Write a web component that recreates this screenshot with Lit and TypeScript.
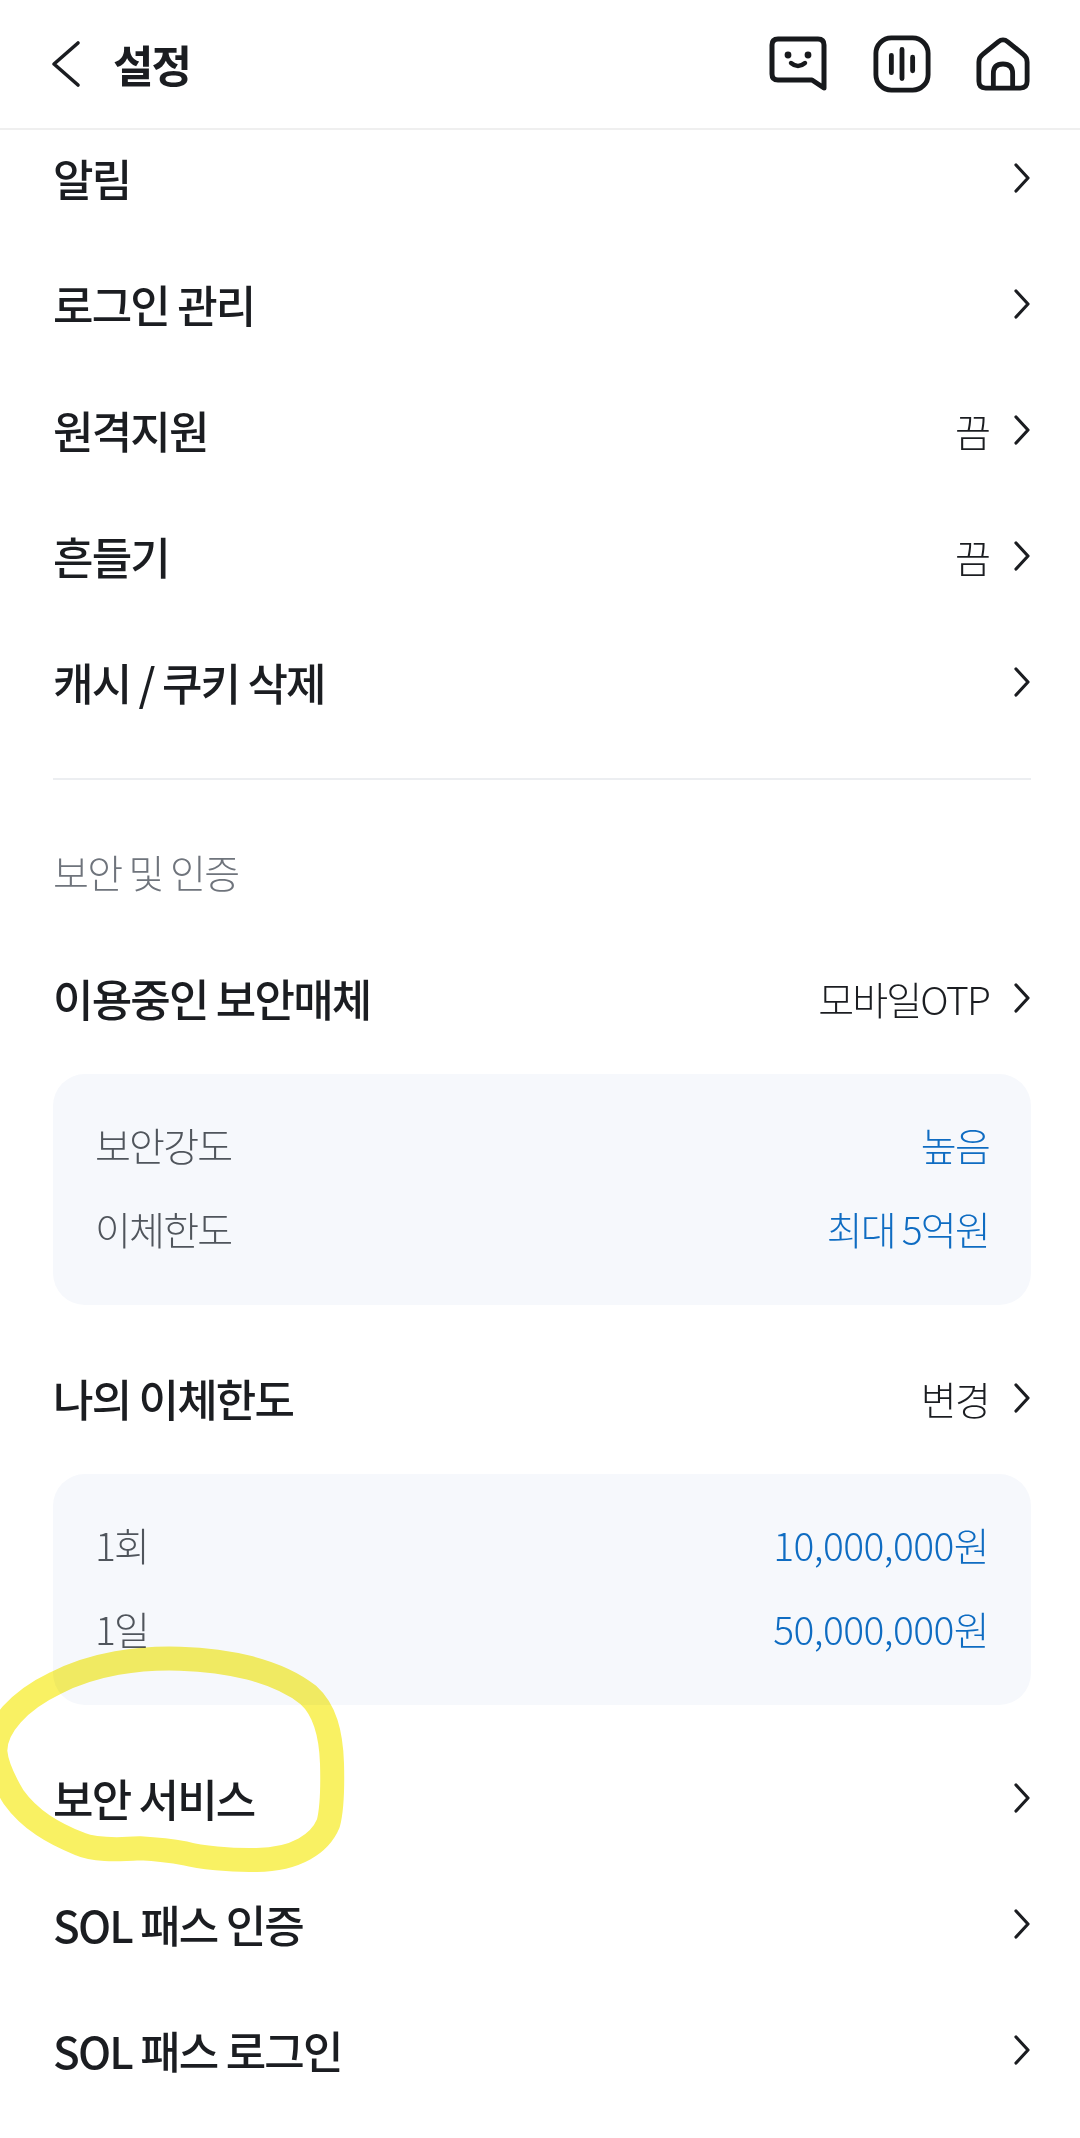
import { LitElement, html, css, svg } from "lit";
import { customElement } from "lit/decorators.js";

const chev = html`<svg class="chev" viewBox="0 0 18 32" width="18" height="32"><path d="M3 3 L15 16 L3 29" fill="none" stroke="#1b1d21" stroke-width="3.2" stroke-linecap="round" stroke-linejoin="round"/></svg>`;

@customElement("app-root")
export class AppRoot extends LitElement {
  static styles = css`
    :host { display: block; position: relative; width: 1080px; height: 2138px; overflow: hidden; background: #fff;
      font-family: "Noto Sans CJK KR", "Noto Sans", sans-serif; color: #1b1d21; }
    .header { height: 128px; border-bottom: 2px solid #efefef; display: flex; align-items: center; padding: 0 50px 0 51px; }
    .back { margin-right: 32px; display: block; }
    .title { font-size: 44px; font-weight: 700; letter-spacing: -2px; line-height: 1; flex: 1; }
    .icons { display: flex; align-items: center; gap: 45px; }
    .icons svg { display: block; }
    .content { padding: 2px 49px 0 53px; display: flex; flex-direction: column; }
    .row { height: 92px; margin-bottom: 34px; display: flex; align-items: center; justify-content: space-between; }
    .row.last { margin-bottom: 0; }
    .name { font-size: 44px; font-weight: 500; letter-spacing: -1.8px; line-height: 1; }
    .right { display: flex; align-items: center; gap: 24px; font-size: 39px; font-weight: 300; letter-spacing: -1.8px; line-height: 1; }
    .chev { display: block; }
    .divider { height: 2px; background: #eceef1; margin: 50px 0 0 0; }
    .section { font-size: 39px; font-weight: 300; color: #6f747c; letter-spacing: -1.6px; line-height: 1; margin-top: 72px; margin-bottom: 61px; }
    .card { background: #f6f8fc; border-radius: 32px; height: 231px; margin: -4px 0 47px; padding: 0 42px 6px; display: flex; flex-direction: column; justify-content: center; gap: 40px; box-sizing: border-box; margin-right: 0; }
    .kv { display: flex; justify-content: space-between; align-items: center; height: 44px; font-size: 39px; font-weight: 300; letter-spacing: -1.8px; line-height: 1; }
    .k { color: #50555c; }
    .v { color: #0f6cc2; }
    .num { letter-spacing: -0.6px; }
    .ink { position: absolute; left: 0; top: 1620px; pointer-events: none; mix-blend-mode: multiply; }
  `;

  row(name: string, value = "", last = false) {
    return html`<div class="row ${last ? "last" : ""}"><span class="name">${name}</span><span class="right">${value ? html`<span>${value}</span>` : ""}${chev}</span></div>`;
  }

  card(items: [string, string][], num = false) {
    return html`<div class="card">${items.map(([k, v]) => html`<div class="kv"><span class="k">${k}</span><span class="v ${num ? "num" : ""}">${v}</span></div>`)}</div>`;
  }

  render() {
    return html`
      <div class="header">
        <svg class="back" width="30" height="48" viewBox="0 0 30 48"><path d="M27 3 L3 24 L27 45" fill="none" stroke="#1b1d21" stroke-width="3.6" stroke-linecap="round" stroke-linejoin="round"/></svg>
        <span class="title">설정</span>
        <div class="icons">
          <svg width="60" height="56" viewBox="0 0 60 56"><path d="M10 3 H50 Q56 3 56 9 V52 L44 44 H10 Q4 44 4 38 V9 Q4 3 10 3 Z" fill="none" stroke="#17191c" stroke-width="5" stroke-linejoin="round"/><circle cx="20" cy="19" r="3.4" fill="#17191c"/><circle cx="40" cy="19" r="3.4" fill="#17191c"/><path d="M23 27 Q30 33 37 27" fill="none" stroke="#17191c" stroke-width="4.4" stroke-linecap="round"/></svg>
          <svg width="58" height="58" viewBox="0 0 60 60"><rect x="3" y="3" width="54" height="54" rx="16" fill="none" stroke="#17191c" stroke-width="5"/><path d="M19 21 V39 M30 15 V45 M41 23 V37" fill="none" stroke="#17191c" stroke-width="5" stroke-linecap="round"/></svg>
          <svg width="54" height="54" viewBox="0 0 56 56"><path d="M28 3 Q30.500 3 33 5 L49 18 Q53 21 53 26 V46 Q53 53 46 53 H10 Q3 53 3 46 V26 Q3 21 7 18 L23 5 Q25.500 3 28 3 Z" fill="none" stroke="#17191c" stroke-width="5" stroke-linejoin="round"/><path d="M18 52 V38 Q18 28 28 28 Q38 28 38 38 V52" fill="none" stroke="#17191c" stroke-width="5"/></svg>
        </div>
      </div>
      <div class="content">
        ${this.row("알림")}
        ${this.row("로그인 관리")}
        ${this.row("원격지원", "끔")}
        ${this.row("흔들기", "끔")}
        ${this.row("캐시 / 쿠키 삭제", "", true)}
        <div class="divider"></div>
        <div class="section">보안 및 인증</div>
        ${this.row("이용중인 보안매체", "모바일OTP")}
        ${this.card([["보안강도", "높음"], ["이체한도", "최대 5억원"]])}
        ${this.row("나의 이체한도", "변경")}
        ${this.card([["1회", "10,000,000원"], ["1일", "50,000,000원"]], true)}
        ${this.row("보안 서비스")}
        ${this.row("SOL 패스 인증")}
        ${this.row("SOL 패스 로그인")}
      </div>
      <svg class="ink" width="400" height="300" viewBox="0 0 1200 900">
        ${svg`<path d="M-14 395 C-16 320 60 240 165 190 C280 130 420 112 540 116 C680 120 830 150 925 225 C975 270 993 340 996 430 C998 500 998 560 985 610 C960 670 890 718 770 720 C690 722 600 712 555 700 C510 692 470 688 420 685 C340 690 280 690 240 672 C160 640 90 600 40 530 C10 480 -10 440 -14 395 Z" fill="none" stroke="#f9f163" stroke-width="72" stroke-linejoin="round"/>`}
      </svg>
    `;
  }
}
